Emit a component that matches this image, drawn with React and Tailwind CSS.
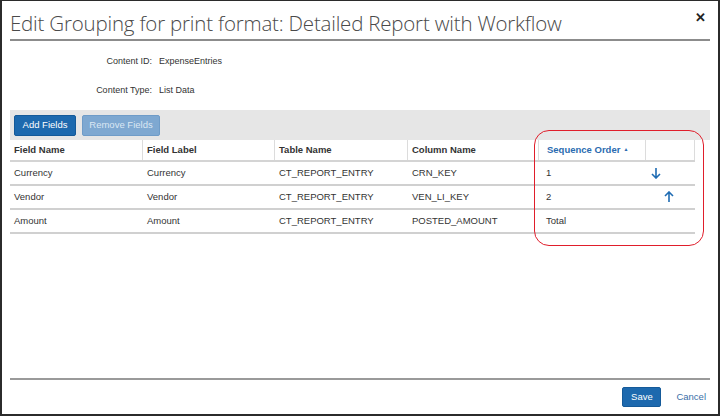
import React from 'react';

const columns = [
  { label: 'Field Name', width: 'w-[132px]' },
  { label: 'Field Label', width: 'w-[132px]' },
  { label: 'Table Name', width: 'w-[133px]' },
  { label: 'Column Name', width: 'w-[131px]' },
];

const rows = [
  { name: 'Currency', label: 'Currency', table: 'CT_REPORT_ENTRY', column: 'CRN_KEY', order: '1', move: 'down' },
  { name: 'Vendor', label: 'Vendor', table: 'CT_REPORT_ENTRY', column: 'VEN_LI_KEY', order: '2', move: 'up' },
  { name: 'Amount', label: 'Amount', table: 'CT_REPORT_ENTRY', column: 'POSTED_AMOUNT', order: 'Total' },
];

const Arrow = ({ dir }) => (
  <svg width="10" height="12" viewBox="0 0 10 12" className="text-[#1f6cb3] block">
    {dir === 'down' ? (
      <path d="M5 1v10M1 7l4 4 4-4" fill="none" stroke="currentColor" strokeWidth="1.6" />
    ) : (
      <path d="M5 11V1M1 5l4-4 4 4" fill="none" stroke="currentColor" strokeWidth="1.6" />
    )}
  </svg>
);

export default function App() {
  return (
    <div className="relative w-[720px] h-[416px] bg-white border-t border-r-2 border-b-2 border-l-2 border-[#2b2b2b] flex flex-col font-['Liberation_Sans',Arial,sans-serif] text-[9.5px] text-[#333]">
      {/* Header */}
      <div className="mx-[8px] border-b-2 border-[#8c8c8c] h-[40px] flex items-center justify-between">
        <h1 className="font-['Open_Sans',sans-serif] font-light text-[20.5px] text-[#4a4a4a] tracking-[-0.2px] pt-[7px]">
          Edit Grouping for print format: Detailed Report with Workflow
        </h1>
        <span className="text-[13px] font-bold text-[#222] pr-[4px] -mt-[4px]">✕</span>
      </div>

      {/* Content info */}
      <div className="pt-[14px] flex flex-col gap-[15px] text-[9px]">
        <div className="flex">
          <span className="w-[157px] text-right pr-[7px]">Content ID:</span>
          <span>ExpenseEntries</span>
        </div>
        <div className="flex">
          <span className="w-[157px] text-right pr-[7px]">Content Type:</span>
          <span>List Data</span>
        </div>
      </div>

      {/* Grid */}
      <div className="mx-[8px] mt-[13px]">
        <div className="bg-[#e6e6e6] h-[30px] flex items-center gap-[6px] px-[4px]">
          <button className="h-[21px] w-[62px] rounded-[2px] bg-[#1d69ae] border border-[#155a99] text-white text-[9.5px]">
            Add Fields
          </button>
          <button className="h-[21px] w-[78px] rounded-[2px] bg-[#7ea8d1] border border-[#6f9cc8] text-[#dbe7f3] text-[9.5px]">
            Remove Fields
          </button>
        </div>
        <div className="w-[685px]">
          <div className="flex h-[22px] border-b-2 border-[#d4d4d4] font-bold">
            {columns.map((c, i) => (
              <div key={c.label} className={`${c.width} flex items-center pl-[4px] ${i > 0 ? 'border-l border-[#dcdcdc]' : ''}`}>
                {c.label}
              </div>
            ))}
            <div className="w-[107px] flex items-center pl-[8px] border-l border-[#dcdcdc] text-[#2a6bb0]">
              Sequence Order
              <span className="text-[5px] ml-[3px]">▲</span>
            </div>
            <div className="w-[50px] border-l border-[#dcdcdc] border-r"></div>
          </div>
          {rows.map((r) => (
            <div key={r.name} className="flex h-[24px] border-b-2 border-[#d0d0d0] items-center">
              <div className="w-[132px] pl-[4px]">{r.name}</div>
              <div className="w-[132px] pl-[5px]">{r.label}</div>
              <div className="w-[133px] pl-[5px]">{r.table}</div>
              <div className="w-[131px] pl-[5px]">{r.column}</div>
              <div className="w-[107px] pl-[8px]">{r.order}</div>
              <div className="w-[50px] flex items-center">
                {r.move === 'down' && <span className="ml-[6px]"><Arrow dir="down" /></span>}
                {r.move === 'up' && <span className="ml-[19px]"><Arrow dir="up" /></span>}
              </div>
            </div>
          ))}
        </div>
      </div>

      {/* Footer */}
      <div className="mt-auto mx-[8px] border-t-2 border-[#9a9a9a] h-[36px] flex items-center justify-end gap-[15px] pr-[4px]">
        <button className="h-[20px] w-[39px] rounded-[2px] bg-[#1d69ae] border border-[#155a99] text-white text-[9.5px]">
          Save
        </button>
        <span className="text-[#3b6fa8]">Cancel</span>
      </div>

      {/* Annotation highlight */}
      <div className="absolute left-[532px] top-[129px] w-[170px] h-[116px] rounded-[15px] border-[1.5px] border-[#e01e2b] pointer-events-none"></div>
    </div>
  );
}
